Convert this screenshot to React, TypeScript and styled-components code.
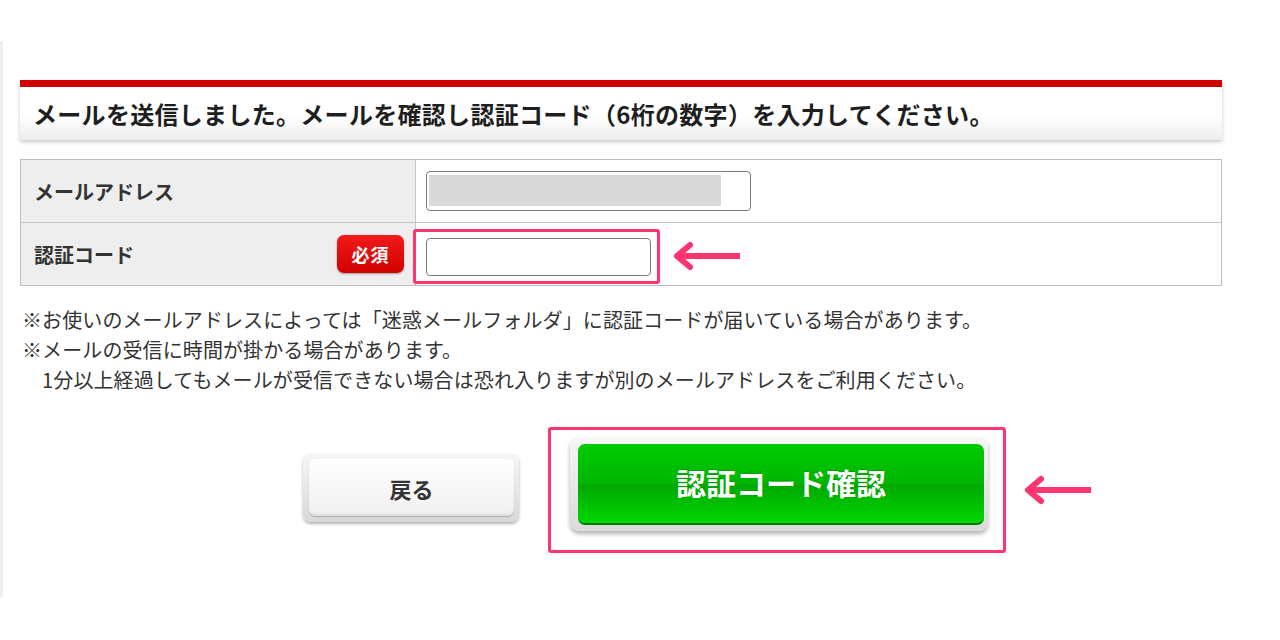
import React from "react";
import styled, { createGlobalStyle } from "styled-components";

const GlobalStyle = createGlobalStyle`
  html, body {
    margin: 0;
    padding: 0;
    background: #ffffff;
  }
  body {
    font-family: "Noto Sans CJK JP", "Noto Sans", sans-serif;
    color: #333333;
  }
`;

const Page = styled.div`
  margin-top: 41px;
  padding-top: 39px;
  height: 517px;
  border-left: 3px solid #eeeeee;
  padding-left: 17px;
  width: 1202px;
`;

const Notice = styled.div`
  height: 53px;
  border-top: 7px solid #cf0000;
  background: linear-gradient(#ffffff 55%, #ededed);
  box-shadow: 0 2px 4px rgba(0, 0, 0, 0.22);
  display: flex;
  align-items: center;
  padding-left: 13px;
  font-size: 24px;
  font-weight: 700;
  color: #1e1e1e;
  letter-spacing: 0.3px;
`;

const Table = styled.div`
  margin-top: 19px;
  border: 1px solid #bdbdbd;
  display: grid;
  grid-template-columns: 395px 1fr;
`;

const LabelCell = styled.div<{ $last?: boolean }>`
  height: 62px;
  background: #eeeeee;
  border-right: 1px solid #c4c4c4;
  border-bottom: ${(p) => (p.$last ? "none" : "1px solid #c4c4c4")};
  display: flex;
  align-items: center;
  justify-content: space-between;
  padding: 0 11px 0 13px;
  font-size: 20px;
  font-weight: 700;
  color: #333333;
`;

const ValueCell = styled.div<{ $last?: boolean }>`
  height: 62px;
  border-bottom: ${(p) => (p.$last ? "none" : "1px solid #c4c4c4")};
  display: flex;
  align-items: center;
  padding-left: 10px;
`;

const Badge = styled.span`
  width: 67px;
  height: 38px;
  border-radius: 7px;
  background: linear-gradient(#f21a1a, #d10000);
  box-shadow: 0 1px 2px rgba(0, 0, 0, 0.35);
  color: #ffffff;
  font-size: 18px;
  font-weight: 700;
  display: flex;
  align-items: center;
  justify-content: center;
  letter-spacing: 1px;
`;

const TextBox = styled.div<{ $w: number; $h: number }>`
  width: ${(p) => p.$w}px;
  height: ${(p) => p.$h}px;
  box-sizing: border-box;
  border: 1px solid #7c7c7c;
  border-radius: 4px;
  background: #ffffff;
  padding: 3px 29px 4px 2px;
`;

const Masked = styled.div`
  height: 100%;
  background: #d9d9d9;
`;

const Highlight = styled.div`
  border: 3px solid #ff3572;
  border-radius: 3px;
  padding: 6px 6px 5px 10px;
  display: flex;
  align-items: center;
`;

const CodeRow = styled.div`
  display: flex;
  align-items: center;
  gap: 13px;
  margin-left: -13px;
  margin-top: 4px;
`;

const Notes = styled.div`
  margin-top: 19px;
  padding-left: 2px;
  font-size: 20px;
  line-height: 30px;
  color: #333333;
  letter-spacing: 0.1px;
  p {
    margin: 0;
  }
`;

const ButtonRow = styled.div`
  margin-top: 32px;
  display: flex;
  align-items: center;
  padding-left: 283px;
`;

const BackFrame = styled.div`
  width: 216px;
  height: 69px;
  box-sizing: border-box;
  padding: 6px 5px 6px 6px;
  border-radius: 8px;
  background: linear-gradient(#f7f7f7, #d8d8d8);
  box-shadow: 0 2px 3px rgba(0, 0, 0, 0.3);
  margin-top: -5px;
`;

const BackButton = styled.button`
  width: 100%;
  height: 100%;
  border: none;
  border-radius: 6px;
  background: linear-gradient(#ffffff, #f0f0f0);
  box-shadow: inset 0 -2px 2px rgba(0, 0, 0, 0.08), 0 1px 1px rgba(0, 0, 0, 0.2);
  font-family: inherit;
  font-size: 22px;
  font-weight: 700;
  color: #333333;
  cursor: pointer;
`;

const SubmitHighlight = styled.div`
  margin-left: 29px;
  border: 3px solid #ff3572;
  border-radius: 3px;
  padding: 7px 15px 19px 19px;
`;

const SubmitFrame = styled.div`
  width: 418px;
  height: 94px;
  box-sizing: border-box;
  padding: 7px 4px 6px 8px;
  border-radius: 9px;
  background: linear-gradient(#f7f7f7, #dadada);
  box-shadow: 0 3px 4px rgba(0, 0, 0, 0.3);
`;

const SubmitButton = styled.button`
  width: 100%;
  height: 100%;
  border: none;
  border-bottom: 2px solid #007a00;
  border-radius: 7px;
  background: linear-gradient(#00cc00 0%, #00b400 50%, #00a800 52%, #00d800 100%);
  font-family: inherit;
  font-size: 30px;
  font-weight: 700;
  color: #ffffff;
  text-shadow: 0 -1px 1px rgba(0, 0, 0, 0.15);
  padding-bottom: 4px;
  cursor: pointer;
`;

const ArrowWrap = styled.div<{ $ml: number }>`
  margin-left: ${(p) => p.$ml}px;
  display: flex;
`;

function Arrow() {
	return (
		<svg width="68" height="30" viewBox="0 0 68 30">
			<line x1="8" y1="15" x2="67" y2="15" stroke="#ff3572" strokeWidth="6" />
			<path d="M17 4 L4 15 L17 26" fill="none" stroke="#ff3572" strokeWidth="6"
				strokeLinecap="round" strokeLinejoin="round" />
		</svg>
	);
}

export default function App() {
	return (
		<>
			<GlobalStyle />
			<Page>
				<Notice>メールを送信しました。メールを確認し認証コード（6桁の数字）を入力してください。</Notice>
				<Table>
					<LabelCell>メールアドレス</LabelCell>
					<ValueCell>
						<TextBox $w={325} $h={40}>
							<Masked />
						</TextBox>
					</ValueCell>
					<LabelCell $last>
						認証コード
						<Badge>必須</Badge>
					</LabelCell>
					<ValueCell $last>
						<CodeRow>
							<Highlight>
								<TextBox $w={225} $h={38} />
							</Highlight>
							<Arrow />
						</CodeRow>
					</ValueCell>
				</Table>
				<Notes>
					<p>※お使いのメールアドレスによっては「迷惑メールフォルダ」に認証コードが届いている場合があります。</p>
					<p>※メールの受信に時間が掛かる場合があります。</p>
					<p>　1分以上経過してもメールが受信できない場合は恐れ入りますが別のメールアドレスをご利用ください。</p>
				</Notes>
				<ButtonRow>
					<BackFrame>
						<BackButton>戻る</BackButton>
					</BackFrame>
					<SubmitHighlight>
						<SubmitFrame>
							<SubmitButton>認証コード確認</SubmitButton>
						</SubmitFrame>
					</SubmitHighlight>
					<ArrowWrap $ml={18}>
						<Arrow />
					</ArrowWrap>
				</ButtonRow>
			</Page>
		</>
	);
}
